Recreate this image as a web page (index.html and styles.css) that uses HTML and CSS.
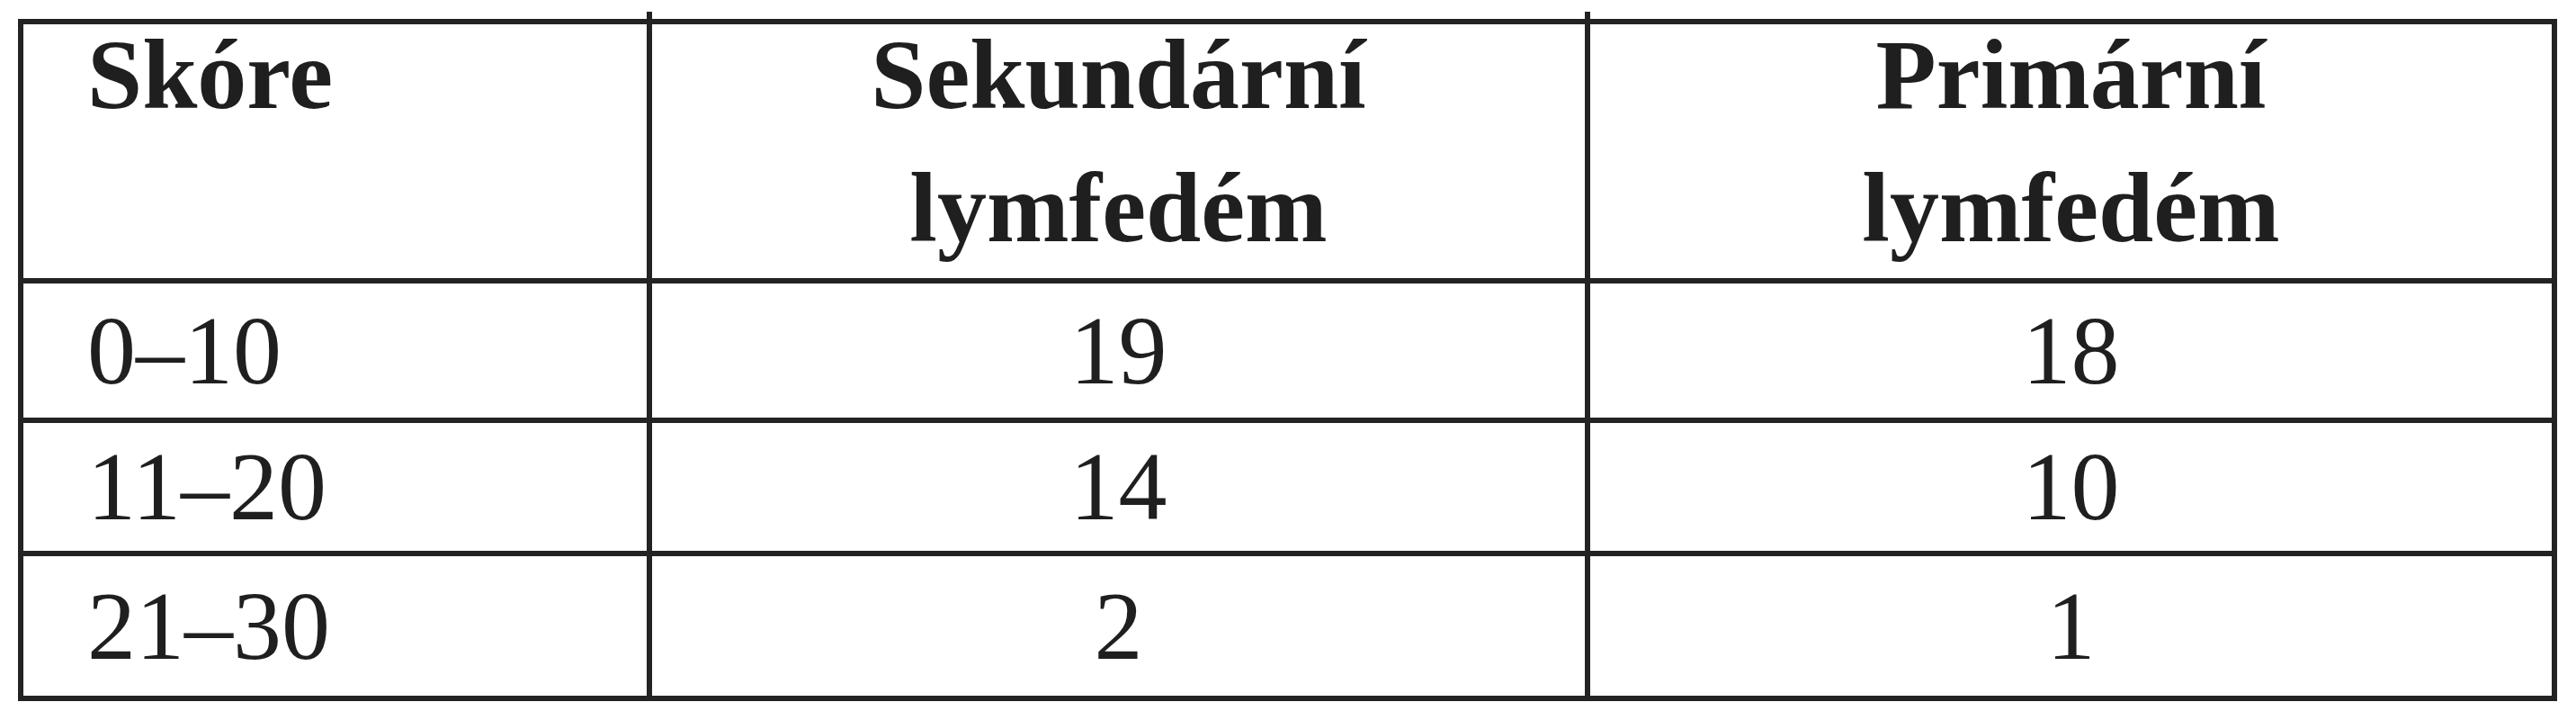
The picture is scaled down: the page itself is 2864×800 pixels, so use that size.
FILE: index.html
```html
<!DOCTYPE html>
<html lang="cs">
<head>
<meta charset="utf-8">
<title>Skóre lymfedému</title>
<link rel="stylesheet" href="styles.css">
</head>
<body>
<div class="score-table">
  <div class="cell head first"><div class="head-text">Skóre</div></div>
  <div class="cell head mid tick"><div class="head-text">Sekundární<br>lymfedém</div></div>
  <div class="cell head mid tick"><div class="head-text">Primární<br>lymfedém</div></div>

  <div class="cell first r1">0–10</div>
  <div class="cell mid r1">19</div>
  <div class="cell mid r1">18</div>

  <div class="cell first r2">11–20</div>
  <div class="cell mid r2">14</div>
  <div class="cell mid r2">10</div>

  <div class="cell first r3">21–30</div>
  <div class="cell mid r3">2</div>
  <div class="cell mid r3">1</div>
</div>
</body>
</html>
```

FILE: styles.css
```css
html, body {
  margin: 0;
  padding: 0;
  background: #ffffff;
}

body {
  font-family: "Liberation Serif", "Times New Roman", serif;
  color: #1f1f1f;
}

.score-table {
  display: grid;
  grid-template-columns: 693px 1037px 1069px;
  grid-template-rows: 282px 149px 142px 155px;
  gap: 6px;
  padding: 6px;
  width: max-content;
  margin: 21px 0 0 20px;
  background: #232323;
}

.cell {
  background: #ffffff;
  font-size: 108px;
  display: flex;
  align-items: center;
  min-width: 0;
}

.cell.first {
  padding-left: 71px;
}

.cell.mid {
  justify-content: center;
  text-align: center;
}

.cell.head {
  font-weight: bold;
  font-size: 110px;
  align-items: flex-start;
  position: relative;
}

.head-text {
  line-height: 148px;
  margin-top: -18px;
}

.cell.tick::before {
  content: "";
  position: absolute;
  top: -14px;
  left: -6px;
  width: 6px;
  height: 14px;
  background: #232323;
}
```
